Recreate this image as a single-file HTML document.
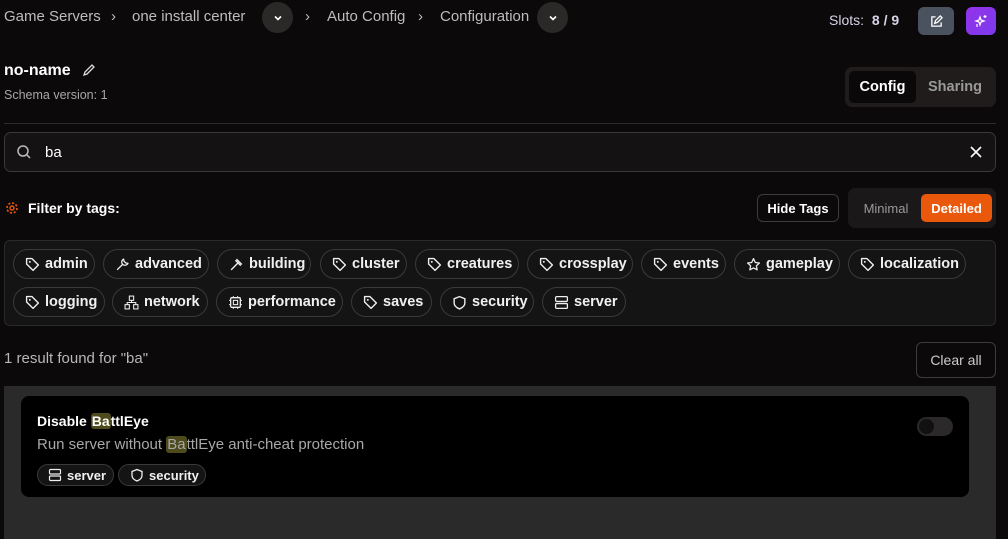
<!DOCTYPE html>
<html><head><meta charset="utf-8"><style>
*{box-sizing:border-box;margin:0;padding:0}
body{width:1008px;height:539px;background:#0b0909;font-family:"Liberation Sans",sans-serif;color:#e8e8e8;position:relative;overflow:hidden}
.a{position:absolute}
.bc{font-size:15px;color:#bdbdbd;top:8px;line-height:18px}
.chev{width:31px;height:31px;border-radius:50%;background:#2b2928;top:2px;display:flex;align-items:center;justify-content:center}
.pill{position:absolute;height:30px;border:1px solid #3a3a3a;border-radius:15px;display:flex;align-items:center;gap:5px;padding-left:11px;font-weight:bold;font-size:14.5px;color:#f0f0f0;background:#141414}
.pill svg{width:15px;height:15px;flex:none}
.hl{background:#4d4a1c;border-radius:3px;padding:0 1px}
.pill svg.sp{width:14px;height:14px}
</style></head><body>
<div class="a bc" style="left:4px">Game Servers</div>
<div class="a bc" style="left:111px">›</div>
<div class="a bc" style="left:132px">one install center</div>
<div class="a chev" style="left:262px"><svg width="12" height="12" viewBox="0 0 12 12"><path d="M3 4.5l3 3 3-3" stroke="#fff" stroke-width="1.6" fill="none"/></svg></div>
<div class="a bc" style="left:305px">›</div>
<div class="a bc" style="left:327px">Auto Config</div>
<div class="a bc" style="left:418px">›</div>
<div class="a bc" style="left:440px">Configuration</div>
<div class="a chev" style="left:537px"><svg width="12" height="12" viewBox="0 0 12 12"><path d="M3 4.5l3 3 3-3" stroke="#fff" stroke-width="1.6" fill="none"/></svg></div>
<div class="a" style="left:829px;top:12px;font-size:14px;color:#d8d4e8">Slots: <b style="margin-left:4px">8 / 9</b></div>
<div class="a" style="left:918px;top:7px;width:36px;height:28px;border-radius:6px;background:#4a5260;display:flex;align-items:center;justify-content:center"><svg width="13" height="13" viewBox="0 0 14 14"><path d="M6 2H2v10h10V8M5 9l1-3 5-5 2 2-5 5z" stroke="#fff" stroke-width="1.4" fill="none"/></svg></div>
<div class="a" style="left:966px;top:7px;width:30px;height:28px;border-radius:6px;background:linear-gradient(135deg,#9333ea,#7c3aed);display:flex;align-items:center;justify-content:center"><svg width="14" height="14" viewBox="0 0 14 14"><path d="M6 3l1 3 3 1-3 1-1 3-1-3-3-1 3-1zM11 1v3M9.5 2.5h3M3 10v3" stroke="#fff" stroke-width="1.2" fill="none"/></svg></div>

<div class="a" style="left:4px;top:62px;font-size:16px;font-weight:bold;color:#fff">no-name</div>
<svg class="a" style="left:82px;top:63px" width="14" height="14" viewBox="0 0 14 14"><path d="M2 12l1-3 7-7 2 2-7 7z" stroke="#ddd" stroke-width="1.3" fill="none"/></svg>
<div class="a" style="left:4px;top:88px;font-size:12.5px;color:#a8a8a8">Schema version: 1</div>
<div class="a" style="left:845px;top:67px;width:151px;height:40px;background:#1f1c1b;border-radius:7px"></div>
<div class="a" style="left:849px;top:71px;width:67px;height:32px;background:#0a0808;border-radius:5px;font-size:14.5px;font-weight:bold;color:#fff;display:flex;align-items:center;justify-content:center">Config</div>
<div class="a" style="left:920px;top:71px;width:70px;height:32px;font-size:14.5px;font-weight:bold;color:#9a9a9a;display:flex;align-items:center;justify-content:center">Sharing</div>
<div class="a" style="left:4px;top:123px;width:992px;height:1px;background:#2e2c2b"></div>

<div class="a" style="left:4px;top:132px;width:992px;height:40px;border:1px solid #3a3838;border-radius:7px;background:#141212"></div>
<svg class="a" style="left:16px;top:144px" width="16" height="16" viewBox="0 0 16 16"><circle cx="7" cy="7" r="5" stroke="#bbb" stroke-width="1.5" fill="none"/><path d="M11 11l3 3" stroke="#bbb" stroke-width="1.5"/></svg>
<div class="a" style="left:45px;top:144px;font-size:15px;color:#fff">ba</div>
<svg class="a" style="left:970px;top:146px" width="12" height="12" viewBox="0 0 12 12"><path d="M1 1l10 10M11 1L1 11" stroke="#fff" stroke-width="1.6"/></svg>

<svg class="a" style="left:5px;top:201px" width="14" height="14" viewBox="0 0 14 14"><circle cx="7" cy="7" r="2" stroke="#ea580c" stroke-width="1.4" fill="none"/><circle cx="7" cy="7" r="5" stroke="#ea580c" stroke-width="1.6" stroke-dasharray="2.2 1.7" fill="none"/></svg>
<div class="a" style="left:28px;top:200px;font-size:14px;font-weight:bold;color:#fff">Filter by tags:</div>
<div class="a" style="left:757px;top:194px;width:82px;height:28px;border:1px solid #3e3c3b;border-radius:6px;font-size:13px;font-weight:bold;color:#fff;display:flex;align-items:center;justify-content:center">Hide Tags</div>
<div class="a" style="left:848px;top:188px;width:148px;height:40px;background:#1a1818;border-radius:7px"></div>
<div class="a" style="left:853px;top:201px;font-size:13px;color:#9a9a9a;width:66px;text-align:center">Minimal</div>
<div class="a" style="left:921px;top:194px;width:71px;height:28px;background:#ea580c;border-radius:5px;font-size:13px;font-weight:bold;color:#fff;display:flex;align-items:center;justify-content:center">Detailed</div>

<div class="a" style="left:4px;top:240px;width:992px;height:86px;background:#141414;border:1px solid #2a2a2a;border-radius:6px"></div>
<svg width="0" height="0" style="position:absolute"><defs>
<symbol id="tag" viewBox="0 0 14 14"><path d="M1.5 1.5h5l6 6-5 5-6-6z" stroke="#eee" stroke-width="1.3" fill="none" stroke-linejoin="round"/><circle cx="4.5" cy="4.5" r="0.9" fill="#eee"/></symbol>
<symbol id="srv" viewBox="0 0 14 14"><rect x="1.5" y="1.5" width="11" height="4.5" rx="1" stroke="#eee" stroke-width="1.2" fill="none"/><rect x="1.5" y="8" width="11" height="4.5" rx="1" stroke="#eee" stroke-width="1.2" fill="none"/></symbol>
<symbol id="shd" viewBox="0 0 14 14"><path d="M7 1.5l5 2v4c0 3-2.5 4.5-5 5.5-2.5-1-5-2.5-5-5.5v-4z" stroke="#eee" stroke-width="1.3" fill="none"/></symbol>
</defs></svg>
<div class="pill" style="left:13px;top:249px;width:82px"><svg><use href="#tag"/></svg>admin</div>
<div class="pill" style="left:103px;top:249px;width:106px"><svg viewBox="0 0 14 14"><path d="M2 12l5-5M8 2a3 3 0 104 4l-2-.5-1.5-1.5z" stroke="#eee" stroke-width="1.2" fill="none"/></svg>advanced</div>
<div class="pill" style="left:217px;top:249px;width:94px"><svg viewBox="0 0 14 14"><path d="M2 12l6-6M6 3l5 5M7 2l5 5" stroke="#eee" stroke-width="1.3" fill="none"/></svg>building</div>
<div class="pill" style="left:320px;top:249px;width:87px"><svg><use href="#tag"/></svg>cluster</div>
<div class="pill" style="left:415px;top:249px;width:104px"><svg><use href="#tag"/></svg>creatures</div>
<div class="pill" style="left:527px;top:249px;width:106px"><svg><use href="#tag"/></svg>crossplay</div>
<div class="pill" style="left:641px;top:249px;width:85px"><svg><use href="#tag"/></svg>events</div>
<div class="pill" style="left:734px;top:249px;width:106px"><svg viewBox="0 0 14 14"><path d="M7 1.5l1.7 3.6 3.8.5-2.8 2.6.7 3.8L7 10.2 3.6 12l.7-3.8L1.5 5.6l3.8-.5z" stroke="#eee" stroke-width="1.2" fill="none" stroke-linejoin="round"/></svg>gameplay</div>
<div class="pill" style="left:848px;top:249px;width:118px"><svg><use href="#tag"/></svg>localization</div>
<div class="pill" style="left:13px;top:287px;width:92px"><svg><use href="#tag"/></svg>logging</div>
<div class="pill" style="left:112px;top:287px;width:96px"><svg viewBox="0 0 14 14"><rect x="5" y="1" width="4" height="4" stroke="#eee" fill="none"/><rect x="1" y="9" width="4" height="4" stroke="#eee" fill="none"/><rect x="9" y="9" width="4" height="4" stroke="#eee" fill="none"/><path d="M7 5v2M3 9V7h8v2" stroke="#eee" fill="none"/></svg>network</div>
<div class="pill" style="left:216px;top:287px;width:127px"><svg viewBox="0 0 14 14"><rect x="2.5" y="2.5" width="9" height="9" rx="1" stroke="#eee" stroke-width="1.2" fill="none"/><rect x="5" y="5" width="4" height="4" stroke="#eee" fill="none"/><path d="M5 1v1.5M9 1v1.5M5 11.5V13M9 11.5V13M1 5h1.5M1 9h1.5M11.5 5H13M11.5 9H13" stroke="#eee"/></svg>performance</div>
<div class="pill" style="left:351px;top:287px;width:81px"><svg><use href="#tag"/></svg>saves</div>
<div class="pill" style="left:440px;top:287px;width:94px"><svg><use href="#shd"/></svg>security</div>
<div class="pill" style="left:542px;top:287px;width:84px"><svg><use href="#srv"/></svg>server</div>

<div class="a" style="left:4px;top:350px;font-size:15px;color:#b8b8b8">1 result found for "ba"</div>
<div class="a" style="left:916px;top:342px;width:80px;height:36px;border:1px solid #3e3c3b;border-radius:6px;font-size:14px;color:#ccc;display:flex;align-items:center;justify-content:center">Clear all</div>

<div class="a" style="left:4px;top:386px;width:992px;height:153px;background:#2a2a2a"></div>
<div class="a" style="left:21px;top:396px;width:948px;height:101px;background:#000;border-radius:8px"></div>
<div class="a" style="left:37px;top:413px;font-size:14px;font-weight:bold;color:#fff">Disable <span class="hl">Ba</span>ttlEye</div>
<div class="a" style="left:37px;top:436px;font-size:15px;color:#a8a8a8">Run server without <span class="hl">Ba</span>ttlEye anti-cheat protection</div>
<div class="pill" style="left:37px;top:464px;width:77px;height:22px;font-size:13px;background:#141414;padding-left:10px"><svg class="sp"><use href="#srv"/></svg>server</div>
<div class="pill" style="left:118px;top:464px;width:88px;height:22px;font-size:13px;background:#141414;padding-left:11px"><svg class="sp"><use href="#shd"/></svg>security</div>
<div class="a" style="left:917px;top:417px;width:36px;height:19px;border-radius:10px;background:#2b2929"></div>
<div class="a" style="left:919px;top:419px;width:15px;height:15px;border-radius:50%;background:#111"></div>
</body></html>
